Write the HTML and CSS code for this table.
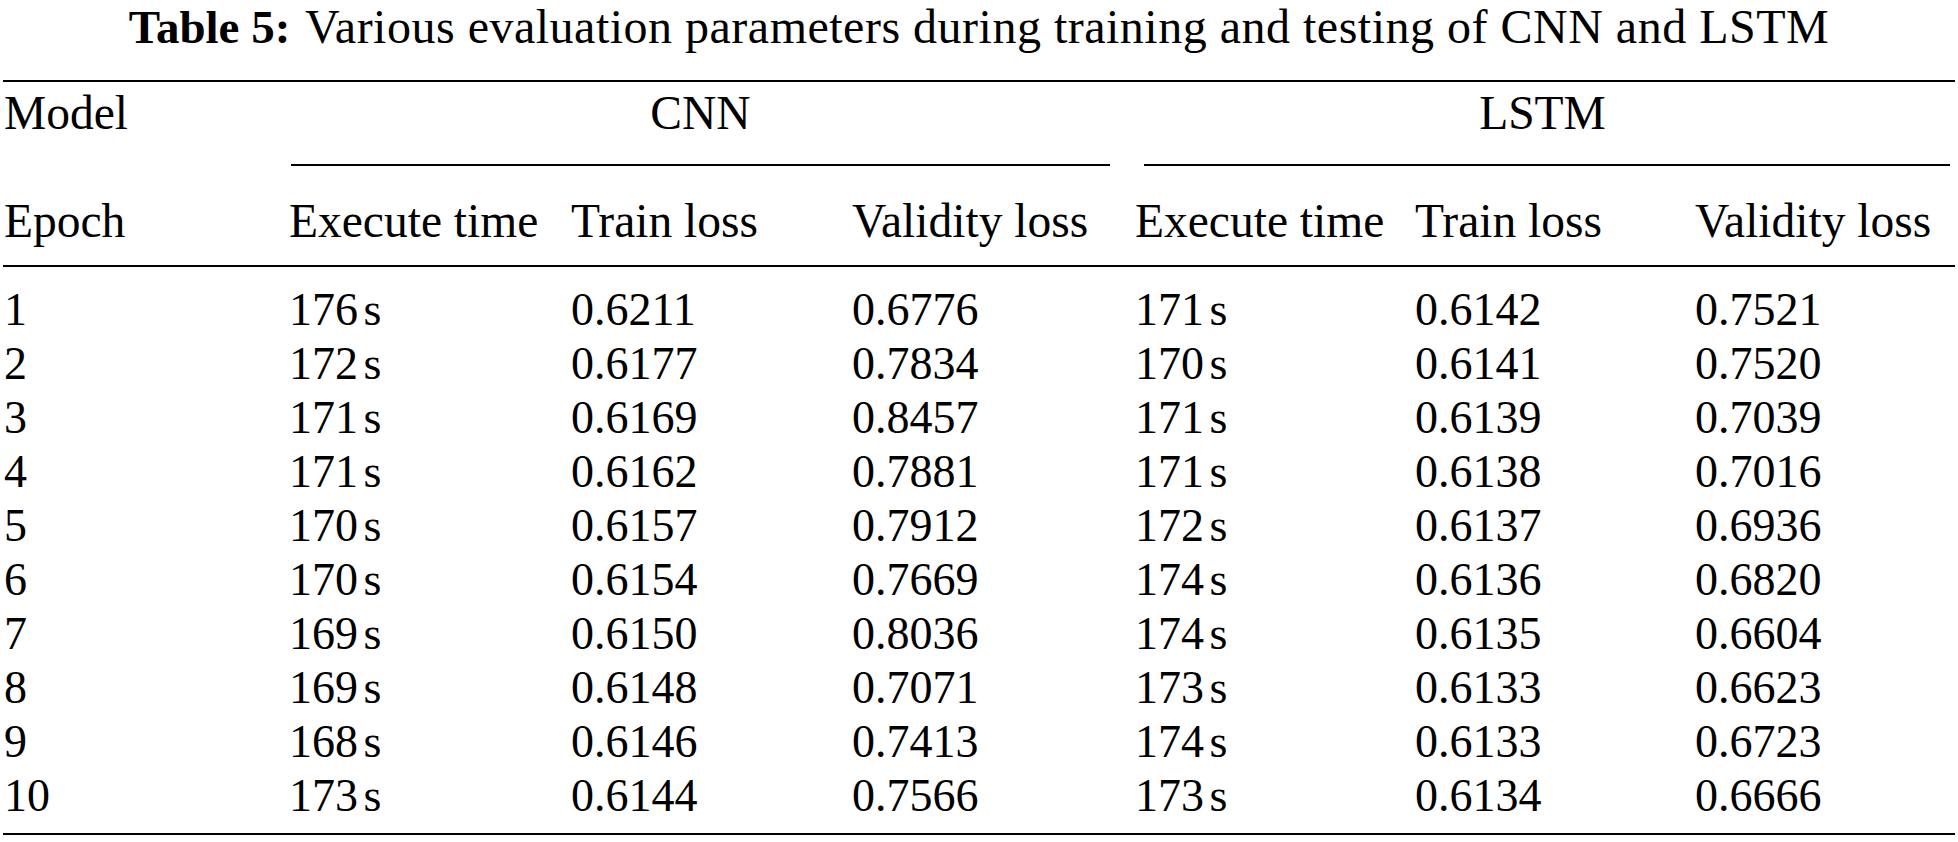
FILE: index.html
```html
<!DOCTYPE html>
<html lang="en">
<head>
<meta charset="utf-8">
<title>Table 5</title>
<link rel="stylesheet" href="styles.css">
</head>
<body>
<div class="page">
  <p class="caption"><span class="label">Table 5:</span> Various evaluation parameters during training and testing of CNN and LSTM</p>
  <table class="results">
    <colgroup>
      <col class="c0"><col class="c1"><col class="c2"><col class="c3"><col class="c4"><col class="c5"><col class="c6">
    </colgroup>
    <thead>
      <tr class="group-row">
        <th class="stub">Model</th>
        <th colspan="3" class="group group-cnn">CNN</th>
        <th colspan="3" class="group group-lstm">LSTM</th>
      </tr>
      <tr class="cmid-row">
        <td></td>
        <td colspan="3"><div class="cmid cmid-cnn"></div></td>
        <td colspan="3"><div class="cmid cmid-lstm"></div></td>
      </tr>
      <tr class="head-row">
        <th class="stub">Epoch</th>
        <th>Execute time</th>
        <th>Train loss</th>
        <th>Validity loss</th>
        <th>Execute time</th>
        <th>Train loss</th>
        <th>Validity loss</th>
      </tr>
    </thead>
    <tbody>
      <tr><td>1</td><td>176<span class="gap"> </span>s</td><td>0.6211</td><td>0.6776</td><td>171<span class="gap"> </span>s</td><td>0.6142</td><td>0.7521</td></tr>
      <tr><td>2</td><td>172<span class="gap"> </span>s</td><td>0.6177</td><td>0.7834</td><td>170<span class="gap"> </span>s</td><td>0.6141</td><td>0.7520</td></tr>
      <tr><td>3</td><td>171<span class="gap"> </span>s</td><td>0.6169</td><td>0.8457</td><td>171<span class="gap"> </span>s</td><td>0.6139</td><td>0.7039</td></tr>
      <tr><td>4</td><td>171<span class="gap"> </span>s</td><td>0.6162</td><td>0.7881</td><td>171<span class="gap"> </span>s</td><td>0.6138</td><td>0.7016</td></tr>
      <tr><td>5</td><td>170<span class="gap"> </span>s</td><td>0.6157</td><td>0.7912</td><td>172<span class="gap"> </span>s</td><td>0.6137</td><td>0.6936</td></tr>
      <tr><td>6</td><td>170<span class="gap"> </span>s</td><td>0.6154</td><td>0.7669</td><td>174<span class="gap"> </span>s</td><td>0.6136</td><td>0.6820</td></tr>
      <tr><td>7</td><td>169<span class="gap"> </span>s</td><td>0.6150</td><td>0.8036</td><td>174<span class="gap"> </span>s</td><td>0.6135</td><td>0.6604</td></tr>
      <tr><td>8</td><td>169<span class="gap"> </span>s</td><td>0.6148</td><td>0.7071</td><td>173<span class="gap"> </span>s</td><td>0.6133</td><td>0.6623</td></tr>
      <tr><td>9</td><td>168<span class="gap"> </span>s</td><td>0.6146</td><td>0.7413</td><td>174<span class="gap"> </span>s</td><td>0.6133</td><td>0.6723</td></tr>
      <tr><td>10</td><td>173<span class="gap"> </span>s</td><td>0.6144</td><td>0.7566</td><td>173<span class="gap"> </span>s</td><td>0.6134</td><td>0.6666</td></tr>
    </tbody>
  </table>
</div>
</body>
</html>
```

FILE: styles.css
```css
html, body {
  margin: 0;
  padding: 0;
  background: #ffffff;
  color: #000000;
}

.page {
  width: 1952px;
  padding: 0 3px;
  font-family: "Liberation Serif", "Times New Roman", serif;
}

.caption {
  margin: 0;
  font-family: "Liberation Serif", "Times New Roman", serif;
  font-size: 48px;
  letter-spacing: 0.5px;
  line-height: 54px;
  text-align: center;
  white-space: nowrap;
}

.label {
  font-size: 47px;
  letter-spacing: 0;
  font-weight: bold;
  margin-right: 3px;
}

.results {
  margin-top: 26px;
  width: 1952px;
  border-collapse: separate;
  border-spacing: 0;
  table-layout: fixed;
  font-family: "Liberation Serif", "Times New Roman", serif;
  font-size: 46px;
  line-height: 54px;
}

.results th,
.results td {
  padding: 0;
  height: 54px;
  text-align: left;
  font-weight: normal;
  vertical-align: top;
  white-space: nowrap;
}

.results th {
  font-size: 47.5px;
}

.gap {
  letter-spacing: -6px;
}

.c0 { width: 286px; }
.c1 { width: 282px; }
.c2 { width: 281px; }
.c3 { width: 283px; }
.c4 { width: 280px; }
.c5 { width: 280px; }
.c6 { width: 260px; }

.results .stub {
  padding-left: 1px;
}

.group-row th {
  border-top: 2px solid #000;
  padding-top: 4px;
}

.results .group {
  text-align: center;
}

.results .group-cnn {
  padding-right: 23px;
}

.results .group-lstm {
  padding-left: 9px;
  padding-right: 14px;
}

.results .cmid-row td {
  height: auto;
  font-size: 0;
  line-height: 0;
}

.cmid {
  border-top: 2px solid #000;
  margin-top: 24px;
  margin-bottom: 28px;
}

.cmid-cnn {
  margin-left: 2px;
  margin-right: 25px;
}

.cmid-lstm {
  margin-left: 9px;
  margin-right: 5px;
}

.head-row th {
  padding-bottom: 17px;
  border-bottom: 2px solid #000;
}

.results tbody tr:first-child td {
  padding-top: 16px;
}

.results tbody tr:last-child td {
  padding-bottom: 10px;
  border-bottom: 2px solid #000;
}

.results tbody td:first-child {
  padding-left: 1px;
}
```
